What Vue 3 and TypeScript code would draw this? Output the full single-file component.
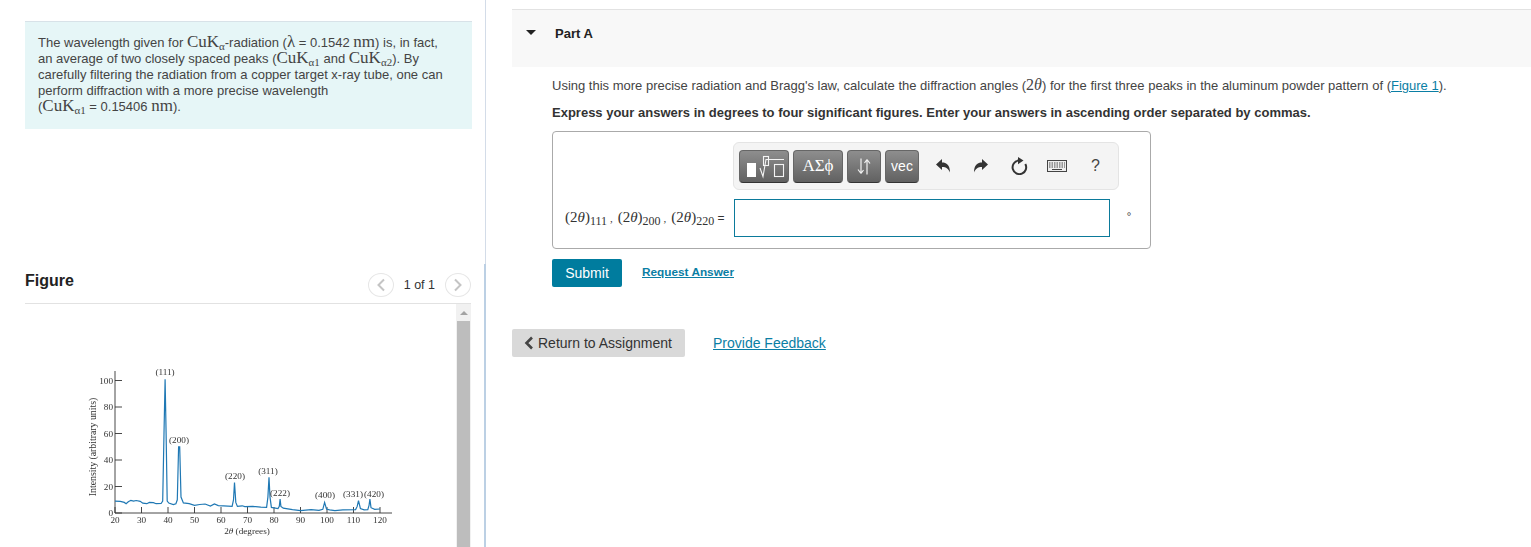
<script setup lang="ts">
// 2theta / intensity -> page pixels of the diffraction pattern
const toX = (t: number) => 115 + (t - 20) * 2.65
const toY = (i: number) => 513 - i * 1.325

const pattern: [number, number][] = [
  [20, 9], [22, 8.8], [23.5, 8], [24.2, 7], [25, 8.5], [26, 9.6], [27, 9], [28, 9.4], [29.5, 8.8], [30.5, 7.4],
  [32, 7], [33, 8], [34.5, 7.8], [35.5, 7], [37.4, 7.2], [38, 9], [38.5, 60], [38.9, 101], [39.3, 60], [39.7, 9],
  [40.3, 7.5], [42, 6.4], [43, 7], [43.5, 10], [44, 50], [44.4, 50], [44.9, 12], [45.8, 7.6], [48, 7], [50, 5.8],
  [52, 6.4], [54, 6.8], [56, 5.2], [57.5, 6.8], [59, 5.6], [61, 5.4], [64.2, 5], [64.7, 10], [65.1, 23], [65.6, 8],
  [66.2, 5], [68, 5.4], [69, 4.8], [72, 5], [75, 4.4], [77.2, 4.2], [77.7, 12], [78.1, 27], [78.5, 12], [79, 4.2],
  [81.5, 3.4], [82, 5], [82.3, 10.5], [82.6, 5], [83.5, 3.6], [87, 2.6], [90, 1.8], [94, 2.6], [97, 2], [98.4, 2.8],
  [99.1, 8], [99.8, 3], [101, 2.4], [103, 1.8], [106, 2.4], [110.8, 2.6], [111.4, 5], [111.9, 9.3], [112.6, 3.4],
  [114, 2.4], [115.4, 2.6], [115.9, 6], [116.2, 10.5], [116.6, 4], [118, 2.8], [120, 3],
]

const spectrum = pattern.map(([t, i], n) => `${n ? 'L' : 'M'}${toX(t).toFixed(1)} ${toY(i).toFixed(1)}`).join(' ')

const yTicks = [0, 20, 40, 60, 80, 100]
const xTicks = [20, 30, 40, 50, 60, 70, 80, 90, 100, 110, 120]

const peakLabels = [
  { text: '(111)', x: 165, y: 375 },
  { text: '(200)', x: 179, y: 443 },
  { text: '(220)', x: 235, y: 479 },
  { text: '(311)', x: 268, y: 474 },
  { text: '(222)', x: 280, y: 496 },
  { text: '(400)', x: 325, y: 498 },
  { text: '(331)', x: 353, y: 497 },
  { text: '(420)', x: 374, y: 497 },
]
</script>

<template>
  <div class="page">
    <aside class="left">
      <div class="note">
        The wavelength given for <span class="m">CuK<sub>α</sub></span>-radiation (<span class="m">λ</span> = 0.1542 <span class="m">nm</span>) is, in fact,<br />
        an average of two closely spaced peaks (<span class="m">CuK<sub>α1</sub></span> and <span class="m">CuK<sub>α2</sub></span>). By<br />
        carefully filtering the radiation from a copper target x-ray tube, one can<br />
        perform diffraction with a more precise wavelength<br />
        (<span class="m">CuK<sub>α1</sub></span> = 0.15406 <span class="m">nm</span>).
      </div>

      <section class="figure">
        <header class="figure-head">
          <h2>Figure</h2>
          <div class="pager">
            <button class="page-btn" aria-label="Previous">
              <svg width="10" height="14" viewBox="0 0 10 14"><path d="M8 1.500 2.500 7 8 12.500" /></svg>
            </button>
            <span>1 of 1</span>
            <button class="page-btn" aria-label="Next">
              <svg width="10" height="14" viewBox="0 0 10 14"><path d="M2 1.500 7.500 7 2 12.500" /></svg>
            </button>
          </div>
        </header>
        <div class="figure-body">
          <svg class="chart" width="431" height="243" viewBox="25 304 431 243">
            <g class="axes">
              <path d="M115 371V513H392" />
              <path v-for="t in yTicks" :key="t" :d="`M115 ${toY(t)}h7`" />
              <path v-for="t in xTicks" :key="t" :d="`M${toX(t)} 513v-6`" />
            </g>
            <path class="trace" :d="spectrum" />
            <g class="labels">
              <text v-for="t in yTicks" :key="t" x="113" :y="toY(t) + 3" text-anchor="end">{{ t }}</text>
              <text v-for="t in xTicks" :key="t" :x="toX(t)" y="522.500" text-anchor="middle">{{ t }}</text>
              <text v-for="p in peakLabels" :key="p.text" :x="p.x" :y="p.y" text-anchor="middle">{{ p.text }}</text>
              <text x="247" y="534" text-anchor="middle">2<tspan font-style="italic">θ</tspan> (degrees)</text>
              <text class="y-title" transform="translate(96 447) rotate(-90)" text-anchor="middle">Intensity (arbitrary units)</text>
            </g>
          </svg>
          <div class="scrollbar">
            <span class="scroll-up"></span>
            <span class="scroll-thumb"></span>
          </div>
        </div>
      </section>
    </aside>

    <main class="right">
      <div class="part-head">
        <span class="caret"></span>
        <strong>Part A</strong>
      </div>

      <div class="part-body">
        <p class="prompt">
          Using this more precise radiation and Bragg's law, calculate the diffraction angles (<span class="m">2<i>θ</i></span>) for the first three peaks in the aluminum powder pattern of (<a href="#">Figure 1</a>).
        </p>
        <p class="prompt strong">Express your answers in degrees to four significant figures. Enter your answers in ascending order separated by commas.</p>

        <div class="answer-box">
          <div class="toolbar">
            <button class="tool tool-tpl" aria-label="Templates">
              <svg width="48" height="31" viewBox="1 1 48 31">
                <rect x="8" y="13" width="9" height="14" fill="#fff" />
                <g fill="none" stroke="#f4f4f4" stroke-width="1.100">
                  <rect x="24.500" y="6.500" width="5" height="9" />
                  <rect x="35.500" y="14.500" width="9" height="12" />
                  <path d="M21 18l3 8.500 3-17h18" />
                </g>
              </svg>
            </button>
            <button class="tool tool-greek">ΑΣϕ</button>
            <button class="tool tool-arrows" aria-label="Arrows">
              <svg width="14" height="19" viewBox="0 0 14 19">
                <path d="M4 1.500v15M4 16.500 1 12.500M4 16.500l2.500-3.500M10 17.500v-15M10 2.500l3 4M10 2.500 7.500 6" fill="none" stroke="#f2f2f2" stroke-width="1.200" />
              </svg>
            </button>
            <button class="tool tool-vec">vec</button>
            <div class="tool-icons">
              <svg class="ic-undo" width="14" height="14" viewBox="0 0 14 14" aria-label="Undo">
                <path d="M0 5.500 6 0v3.500c4.500 0 8 2.500 8 10-1.500-3.500-3.500-5.500-8-5.500v3z" fill="#333" />
              </svg>
              <svg class="ic-redo" width="14" height="14" viewBox="0 0 14 14" aria-label="Redo">
                <path d="M14 5.500 8 0v3.500c-4.500 0-8 2.500-8 10C1.500 10 3.500 8 8 8v3z" fill="#333" />
              </svg>
              <svg class="ic-reset" width="18" height="18" viewBox="0 0 18 18" aria-label="Reset">
                <path d="M15.300 7A6.800 6.800 0 1 1 8.500 3.600" fill="none" stroke="#333" stroke-width="2" />
                <path d="M8 0 13.500 3.600 8 7.200z" fill="#333" />
              </svg>
              <svg class="ic-keys" width="20" height="12" viewBox="0 0 20 12" aria-label="Keyboard">
                <rect x="0.500" y="0.500" width="19" height="11" fill="#eee" stroke="#444" />
                <path d="M2 3h16M2 5h16M2 7h16" stroke="#444" stroke-dasharray="1.500 1" />
                <path d="M5 9.500h10" stroke="#444" />
              </svg>
              <span class="help">?</span>
            </div>
          </div>
          <div class="answer-row">
            <span class="eq">
              <span class="m">(2<i>θ</i>)<sub>111</sub><span class="sep">,</span>(2<i>θ</i>)<sub>200</sub><span class="sep">,</span>(2<i>θ</i>)<sub>220</sub></span> =
            </span>
            <input class="answer-input" type="text" />
            <span class="unit">∘</span>
          </div>
        </div>

        <div class="actions">
          <button class="submit">Submit</button>
          <a href="#" class="request">Request Answer</a>
        </div>
      </div>

      <div class="footer-row">
        <button class="return">
          <svg width="10" height="14" viewBox="0 0 10 14"><path d="M8 1.500 2.500 7 8 12.500" /></svg>
          Return to Assignment
        </button>
        <a href="#" class="feedback">Provide Feedback</a>
      </div>
    </main>
  </div>
</template>

<style scoped>
.page {
  display: flex;
  height: 547px;
  overflow: hidden;
  font-family: "Liberation Sans", Arial, sans-serif;
  color: #333;
}

.m {
  font-family: "Liberation Serif", "DejaVu Serif", serif;
  font-size: 17px;
  line-height: 0;
}
.m sub {
  font-size: 11px;
  line-height: 0;
  vertical-align: -3px;
}

/* left column */
.left {
  box-sizing: border-box;
  width: 486px;
  flex: none;
  padding-top: 21px;
  border-right: 1px solid #d3dce8;
}
.note {
  box-sizing: border-box;
  width: 447px;
  height: 108px;
  margin-left: 25px;
  padding: 13px 0 0 13px;
  background: #e6f6f7;
  border-top: 1px solid #d8e2e8;
  font-size: 13px;
  line-height: 16px;
  color: #444;
  white-space: nowrap;
}
.figure {
  box-sizing: border-box;
  height: 283px;
  margin-top: 135px;
  margin-right: -1px;
  padding-left: 25px;
  border-right: 2px solid #bcd0e4;
}
.figure-head {
  display: flex;
  align-items: center;
  justify-content: space-between;
  box-sizing: border-box;
  width: 446px;
  height: 40px;
  padding-top: 2px;
  border-bottom: 1px solid #e2e2e2;
}
.figure-head h2 {
  margin: -8px 0 0;
  font-size: 16px;
  font-weight: 700;
  color: #222;
}
.pager {
  display: flex;
  align-items: center;
  gap: 10px;
  font-size: 12.500px;
  color: #333;
}
.page-btn {
  display: flex;
  align-items: center;
  justify-content: center;
  width: 26px;
  height: 24px;
  padding: 0;
  background: #fff;
  border: 1px solid #e6e6e6;
  border-radius: 50%;
}
.page-btn path {
  fill: none;
  stroke: #c4c4c4;
  stroke-width: 2;
}
.figure-body {
  display: flex;
  width: 446px;
  height: 243px;
}
.chart {
  display: block;
  flex: none;
  width: 431px;
  filter: blur(0.3px);
}
.axes path {
  fill: none;
  stroke: #333;
  stroke-width: 0.900;
}
.trace {
  fill: none;
  stroke: #1f78b4;
  stroke-width: 1.200;
}
.labels text {
  font-family: "Liberation Serif", serif;
  font-size: 9.200px;
  fill: #333;
}
.labels .y-title {
  font-size: 9.800px;
}
.scrollbar {
  display: flex;
  flex-direction: column;
  align-items: center;
  width: 15px;
  flex: none;
  background: #f1f1f1;
}
.scroll-up {
  width: 0;
  height: 0;
  margin: 7px 0 6px;
  border: 4px solid transparent;
  border-top: 0;
  border-bottom: 4px solid #a3a3a3;
}
.scroll-thumb {
  flex: 1;
  width: 13px;
  background: #bdbdbd;
}

/* right column */
.right {
  flex: 1;
  min-width: 0;
  padding-top: 9px;
  padding-left: 26px;
}
.part-head {
  display: flex;
  align-items: flex-start;
  box-sizing: border-box;
  height: 58px;
  padding: 16px 0 0 14px;
  background: #f8f8f8;
  border-top: 1px solid #e2e2e2;
  font-size: 13px;
  color: #222;
}
.caret {
  width: 0;
  height: 0;
  margin: 4px 19px 0 0;
  border: 5px solid transparent;
  border-bottom: 0;
  border-top: 5px solid #222;
}
.part-body {
  padding: 10px 0 0 40px;
}
.prompt {
  margin: 0 0 9px;
  font-size: 13px;
  line-height: 18px;
  color: #444;
  white-space: nowrap;
}
.prompt .m {
  font-size: 16px;
}
.prompt a {
  color: #0a7ea4;
}
.prompt.strong {
  margin-bottom: 8px;
  font-weight: 700;
  color: #333;
}
.answer-box {
  box-sizing: border-box;
  width: 599px;
  height: 118px;
  margin-top: 9px;
  padding: 10px 31px 0 0;
  border: 1px solid #aaa;
  border-radius: 4px;
}
.toolbar {
  display: flex;
  align-items: center;
  gap: 4px;
  box-sizing: border-box;
  width: 386px;
  height: 48px;
  margin-left: auto;
  padding-left: 5px;
  background: #f4f4f4;
  border: 1px solid #e4e4e4;
  border-radius: 6px;
}
.tool {
  display: flex;
  align-items: center;
  justify-content: center;
  height: 33px;
  padding: 0;
  color: #fff;
  background: linear-gradient(#8e8e8e, #616161);
  border: 1px solid #666;
  border-bottom-color: #333;
  border-radius: 4px;
}
.tool-tpl { width: 50px; }
.tool-greek {
  width: 50px;
  font-family: "Liberation Serif", serif;
  font-size: 17px;
}
.tool-arrows { width: 34px; }
.tool-vec {
  width: 34px;
  font-family: "Liberation Sans", sans-serif;
  font-size: 14px;
}
.tool-icons {
  display: flex;
  align-items: center;
  flex: 1;
  padding-left: 13px;
}
.ic-redo { margin-left: 24px; }
.ic-reset { margin-left: 22px; }
.ic-keys { margin-left: 19px; }
.help {
  margin-left: 24px;
  font-size: 16px;
  color: #444;
}
.answer-row {
  display: flex;
  align-items: center;
  height: 38px;
  margin-top: 9px;
  padding-left: 12px;
}
.eq {
  width: 169px;
  flex: none;
  font-size: 12px;
  white-space: nowrap;
}
.eq .m {
  font-size: 15px;
}
.eq sub {
  font-size: 12px;
}
.eq .sep {
  margin: 0 5px 0 3px;
  font-size: 11px;
}
.answer-input {
  box-sizing: border-box;
  width: 376px;
  height: 38px;
  flex: none;
  padding: 0;
  background: #fff;
  border: 1px solid #0b7a9b;
}
.unit {
  margin: 0 0 10px 16px;
  font-family: "DejaVu Sans", sans-serif;
  font-size: 10px;
  color: #444;
}
.actions {
  display: flex;
  align-items: flex-start;
  margin-top: 10px;
}
.submit {
  width: 70px;
  height: 28px;
  padding: 0;
  color: #fff;
  background: #007c9e;
  border: 0;
  border-radius: 2px;
  font-family: inherit;
  font-size: 14px;
}
.request {
  margin: 6px 0 0 20px;
  font-size: 11.800px;
  font-weight: 700;
  color: #0a7ea4;
}
.footer-row {
  display: flex;
  align-items: center;
  gap: 28px;
  margin-top: 42px;
}
.return {
  display: flex;
  align-items: center;
  gap: 4px;
  box-sizing: border-box;
  width: 173px;
  height: 28px;
  padding: 0 0 0 12px;
  color: #333;
  background: #d9d9d9;
  border: 0;
  border-radius: 2px;
  font-family: inherit;
  font-size: 14px;
}
.return path {
  fill: none;
  stroke: #444;
  stroke-width: 2.600;
}
.feedback {
  font-size: 14px;
  color: #0a7ea4;
}
</style>

<style>
html,
body {
  margin: 0;
  overflow: hidden;
  background: #fff;
}
</style>
